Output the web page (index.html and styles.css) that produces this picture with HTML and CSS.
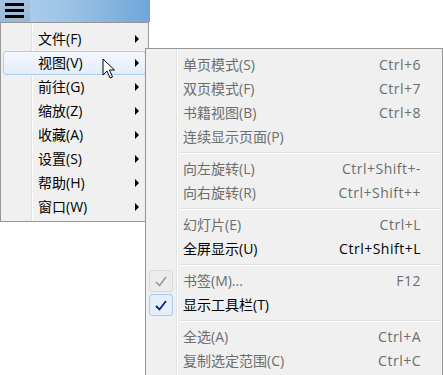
FILE: index.html
```html
<!DOCTYPE html>
<html lang="zh-CN">
<head>
    <meta charset="UTF-8">
    <title>菜单</title>
    <link rel="stylesheet" href="styles.css">
</head>
<body>
    <div class="toolbar">
        <div class="menu-button">
            <svg width="20" height="16" viewBox="0 0 20 16">
                <rect x="0" y="0" width="19" height="3" fill="#000"/>
                <rect x="0" y="6" width="19" height="3" fill="#000"/>
                <rect x="0" y="12" width="19" height="3" fill="#000"/>
            </svg>
        </div>
    </div>

    <div class="menu main-menu">
        <div class="item"><span class="check"></span><span class="label">文件(F)</span><span class="arrow"></span></div>
        <div class="item hover"><span class="check"></span><span class="label">视图(V)</span><span class="arrow"></span></div>
        <div class="item"><span class="check"></span><span class="label">前往(G)</span><span class="arrow"></span></div>
        <div class="item"><span class="check"></span><span class="label">缩放(Z)</span><span class="arrow"></span></div>
        <div class="item"><span class="check"></span><span class="label">收藏(A)</span><span class="arrow"></span></div>
        <div class="item"><span class="check"></span><span class="label">设置(S)</span><span class="arrow"></span></div>
        <div class="item"><span class="check"></span><span class="label">帮助(H)</span><span class="arrow"></span></div>
        <div class="item"><span class="check"></span><span class="label">窗口(W)</span><span class="arrow"></span></div>
    </div>

    <div class="menu sub-menu">
        <div class="item disabled"><span class="check"></span><span class="label">单页模式(S)</span><span class="key">Ctrl+6</span></div>
        <div class="item disabled"><span class="check"></span><span class="label">双页模式(F)</span><span class="key">Ctrl+7</span></div>
        <div class="item disabled"><span class="check"></span><span class="label">书籍视图(B)</span><span class="key">Ctrl+8</span></div>
        <div class="item disabled"><span class="check"></span><span class="label">连续显示页面(P)</span><span class="key"></span></div>
        <div class="sep"></div>
        <div class="item disabled"><span class="check"></span><span class="label">向左旋转(L)</span><span class="key">Ctrl+Shift+-</span></div>
        <div class="item disabled"><span class="check"></span><span class="label">向右旋转(R)</span><span class="key">Ctrl+Shift++</span></div>
        <div class="sep"></div>
        <div class="item disabled"><span class="check"></span><span class="label">幻灯片(E)</span><span class="key">Ctrl+L</span></div>
        <div class="item"><span class="check"></span><span class="label">全屏显示(U)</span><span class="key">Ctrl+Shift+L</span></div>
        <div class="sep"></div>
        <div class="item disabled">
            <span class="check"><span class="box box-off"><svg width="12" height="11" viewBox="0 0 12 11"><path d="M1 6 L4.5 9.5 L11 1" fill="none" stroke="#9a9a9a" stroke-width="1.6"/></svg></span></span>
            <span class="label">书签(M)...</span><span class="key">F12</span>
        </div>
        <div class="item">
            <span class="check"><span class="box box-on"><svg width="12" height="11" viewBox="0 0 12 11"><path d="M1 6 L4.5 9.5 L11 1" fill="none" stroke="#0b1d8c" stroke-width="1.8"/></svg></span></span>
            <span class="label">显示工具栏(T)</span><span class="key"></span>
        </div>
        <div class="sep"></div>
        <div class="item disabled"><span class="check"></span><span class="label">全选(A)</span><span class="key">Ctrl+A</span></div>
        <div class="item disabled"><span class="check"></span><span class="label">复制选定范围(C)</span><span class="key">Ctrl+C</span></div>
    </div>

    <svg class="cursor" width="14" height="22" viewBox="0 0 14 22">
        <path d="M1 1 L1 17 L5 13 L8 20 L10.5 19 L7.5 12 L12.5 12 Z" fill="#fff" stroke="#000" stroke-width="1" stroke-linejoin="miter"/>
    </svg>
</body>
</html>
```

FILE: styles.css
```css
* {
    margin: 0;
    padding: 0;
    box-sizing: border-box;
}

body {
    font-family: "Open Sans", "Noto Sans CJK SC", sans-serif;
    font-size: 14px;
    background-color: #ffffff;
    position: relative;
    width: 443px;
    height: 375px;
    overflow: hidden;
}

.toolbar {
    width: 150px;
    height: 22px;
    background: linear-gradient(to right, #b2d2ee 0%, #9cc3e6 45%, #6fa6d9 100%);
    display: flex;
}

.menu-button {
    width: 30px;
    height: 22px;
    background: linear-gradient(to bottom, #a7c4df, #98b8d6);
    padding: 3px 0 0 5px;
}

.menu-button svg {
    display: block;
}

.menu {
    background-color: #f0f0f0;
    border: 1px solid #979797;
}

.main-menu {
    width: 149px;
    padding: 4px 2px 2px;
    background-image: linear-gradient(to right, transparent 30px, #e2e3e3 30px, #e2e3e3 31px, #ffffff 31px, #ffffff 32px, transparent 32px);
}

.sub-menu {
    position: absolute;
    left: 145px;
    top: 48px;
    width: 298px;
    padding: 4px 2px 2px;
    background-image: linear-gradient(to right, transparent 30px, #e2e3e3 30px, #e2e3e3 31px, #ffffff 31px, #ffffff 32px, transparent 32px);
    box-shadow: 1px 1px 2px rgba(0, 0, 0, 0.15);
}

.item {
    height: 24px;
    display: grid;
    grid-template-columns: 30px 1fr auto;
    column-gap: 4px;
    align-items: center;
    color: #000000;
    border: 1px solid transparent;
    border-radius: 3px;
    line-height: 22px;
}

.item.disabled {
    color: #6d6d6d;
}

.item.hover {
    border-color: #aeccf1;
    background: linear-gradient(to bottom, #f3f8fd, #e3edfa);
}

.check {
    height: 22px;
    display: flex;
    align-items: center;
}

.box {
    width: 24px;
    height: 22px;
    border-radius: 3px;
    display: flex;
    align-items: center;
    justify-content: center;
}

.box-off {
    border: 1px solid #d9d9d9;
    background-color: #ececec;
}

.box-on {
    border: 1px solid #a9c9ef;
    background-color: #e6eefa;
}

.label {
    white-space: nowrap;
}

.key {
    padding-right: 18px;
    letter-spacing: 0.5px;
    white-space: nowrap;
}

.arrow {
    width: 0;
    height: 0;
    margin-right: 6px;
    border-top: 4px solid transparent;
    border-bottom: 4px solid transparent;
    border-left: 4px solid #000000;
}

.sep {
    height: 8px;
    margin-left: 31px;
    padding-top: 3px;
}

.sep::before {
    content: "";
    display: block;
    height: 1px;
    background-color: #e0e0e0;
    border-bottom: 1px solid #ffffff;
    box-sizing: content-box;
}

.cursor {
    position: absolute;
    left: 102px;
    top: 58px;
}
```
